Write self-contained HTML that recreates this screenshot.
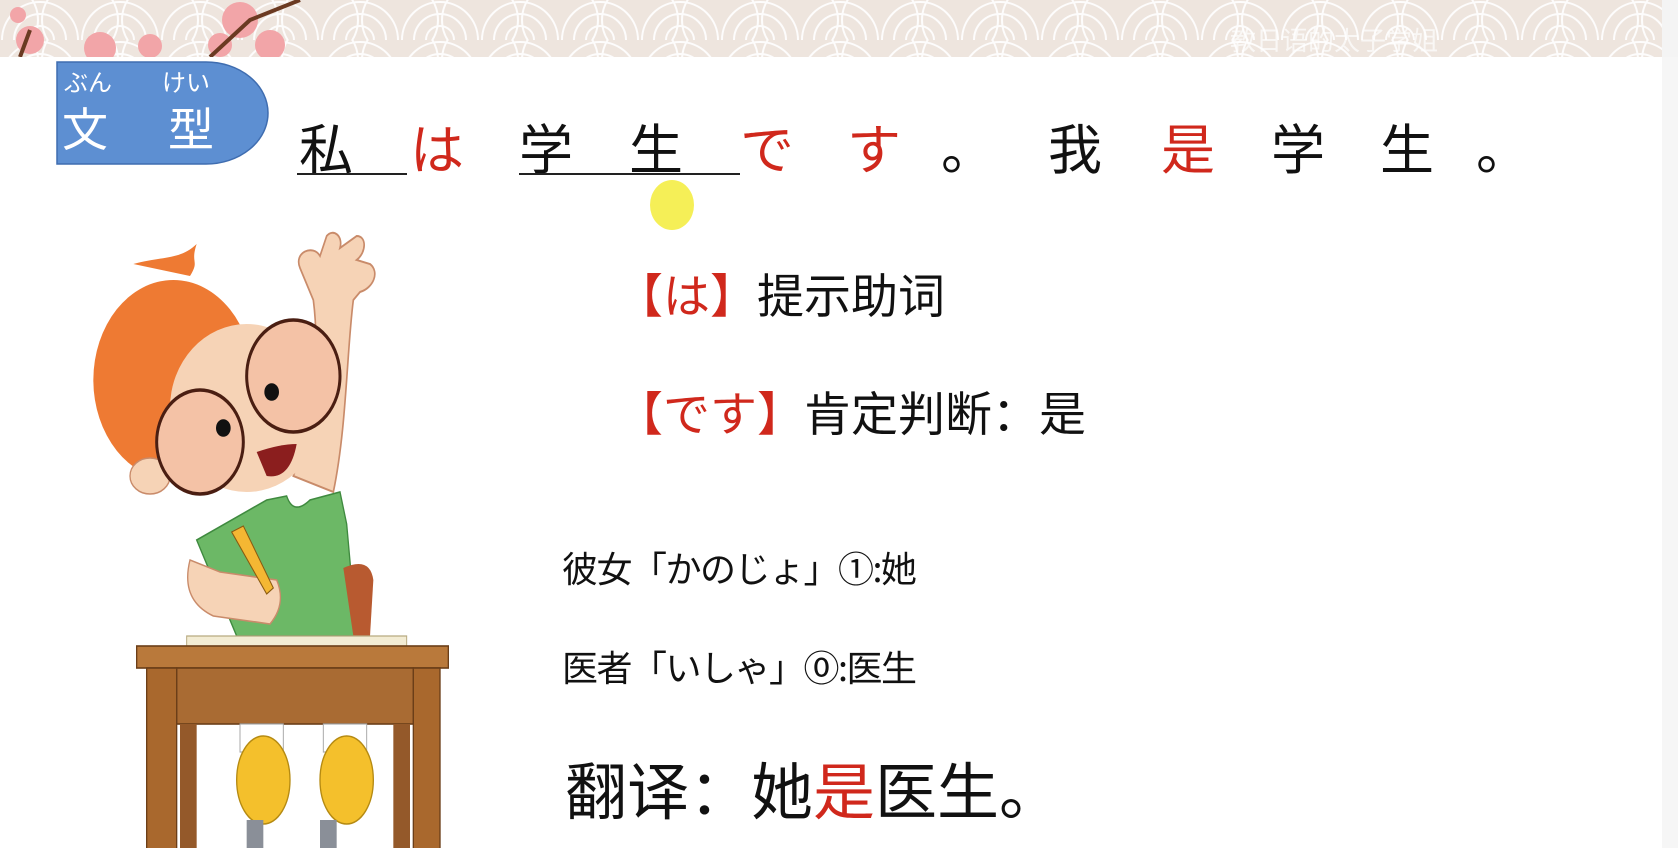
<!DOCTYPE html>
<html><head><meta charset="utf-8"><style>
*{margin:0;padding:0}
body{width:1678px;height:848px;background:#fff;position:relative;overflow:hidden;font-family:"Liberation Sans","Noto Sans CJK SC",sans-serif;color:#111}
.a{position:absolute;white-space:nowrap;line-height:1}
.c{position:absolute;font-size:54px;line-height:1;transform:translate(-50%,-50%);top:146px;font-family:"Noto Sans CJK JP",sans-serif}
.r{color:#d0281c}
</style></head><body>
<svg class="a" style="left:0;top:0" width="1678" height="57" viewBox="0 0 1678 57">
<defs><pattern id="p" width="80" height="40" patternUnits="userSpaceOnUse">
<rect width="80" height="40" fill="#eee5de"/>
<g fill="none" stroke="#fff" stroke-width="2" opacity=".9">
<circle cx="40" cy="40" r="38"/><circle cx="40" cy="40" r="26"/><circle cx="40" cy="40" r="14"/>
<circle cx="0" cy="20" r="38"/><circle cx="80" cy="20" r="38"/></g></pattern></defs>
<rect width="1678" height="57" fill="url(#p)"/>
<rect x="1662" width="16" height="57" fill="#f4f4f4"/>
<g fill="#f2a5a8"><circle cx="30" cy="40" r="14"/><circle cx="100" cy="48" r="16"/><circle cx="150" cy="46" r="12"/><circle cx="240" cy="20" r="18"/><circle cx="270" cy="45" r="15"/><circle cx="220" cy="45" r="12"/><circle cx="18" cy="15" r="8"/></g>
<path d="M210 57 L250 20 L300 0 M20 57 L30 30" stroke="#6b3a22" stroke-width="4" fill="none"/>
<text x="1230" y="50" font-size="26" fill="#fff" opacity=".7" font-family="Noto Sans CJK SC">教日语的太子学姐</text>
</svg>
<div class="a" style="left:1662px;top:57px;width:16px;height:791px;background:#f6f6f6"></div>
<svg class="a" style="left:56px;top:61px" width="214" height="104"><path d="M1 1 H150 A62 51 0 0 1 150 103 H1 Z" fill="#5d8fd2" stroke="#3f6db0" stroke-width="1.5"/>
<text x="8" y="30" font-size="24" fill="#fff" font-family="Noto Sans CJK JP">ぶん</text><text x="106" y="30" font-size="24" fill="#fff" font-family="Noto Sans CJK JP">けい</text>
<text x="6" y="85" font-size="46" fill="#fff" font-family="Noto Sans CJK JP">文</text><text x="112" y="85" font-size="46" fill="#fff" font-family="Noto Sans CJK JP">型</text></svg>
<span class="c" style="left:326px">私</span><span class="c r" style="left:437px">は</span><span class="c" style="left:546px">学</span><span class="c" style="left:656px">生</span><span class="c r" style="left:767px">で</span><span class="c r" style="left:874px">す</span><span class="c" style="left:968px">。</span><span class="c" style="left:1075px">我</span><span class="c r" style="left:1188px">是</span><span class="c" style="left:1298px">学</span><span class="c" style="left:1407px">生</span><span class="c" style="left:1503px">。</span>
<div class="a" style="left:297px;top:173px;width:110px;height:2px;background:#222"></div>
<div class="a" style="left:519px;top:173px;width:221px;height:2px;background:#222"></div>
<div class="a" style="left:650px;top:180px;width:44px;height:50px;border-radius:50%;background:#f3ec3a;opacity:.85"></div>
<div class="a" style="left:616px;top:273px;font-size:47px"><span class="r">【は】</span>提示助词</div>
<div class="a" style="left:616px;top:391px;font-size:47px"><span class="r">【です】</span>肯定判断：是</div>
<div class="a" style="left:562px;top:549px;font-size:36px;letter-spacing:-1.5px;font-family:'Noto Sans CJK JP',sans-serif">彼女「かのじょ」①:她</div>
<div class="a" style="left:562px;top:648px;font-size:36px;letter-spacing:-1.5px;font-family:'Noto Sans CJK JP',sans-serif">医者「いしゃ」⓪:医生</div>
<div class="a" style="left:565px;top:763px;font-size:62px">翻译：她<span class="r">是</span>医生。</div>
<svg class="a" style="left:80px;top:220px" width="380" height="628" viewBox="0 0 1140 1570" preserveAspectRatio="none">
<path d="M640 640 C700 500 720 330 700 200 L660 120 C640 80 700 60 720 90 L740 40 C760 20 790 40 780 70 L830 40 C860 40 860 80 830 100 L870 110 C900 130 880 170 840 180 L820 200 C800 330 800 520 760 680 Z" fill="#f6d3b6" stroke="#c98b6a" stroke-width="5"/>
<ellipse cx="280" cy="400" rx="240" ry="250" fill="#ee7a33"/>
<path d="M160 110 C250 90 300 100 350 60 C330 110 360 100 330 140Z" fill="#ee7a33"/>
<ellipse cx="500" cy="470" rx="230" ry="210" fill="#f6d3b6"/>
<ellipse cx="210" cy="640" rx="60" ry="45" fill="#f6d3b6" stroke="#c98b6a" stroke-width="4"/>
<circle cx="640" cy="390" r="140" fill="#f4c2a6" stroke="#4a1e12" stroke-width="9"/>
<circle cx="360" cy="555" r="130" fill="#f4c2a6" stroke="#4a1e12" stroke-width="9"/>
<circle cx="575" cy="430" r="22" fill="#111"/><circle cx="430" cy="520" r="22" fill="#111"/>
<path d="M530 580 Q600 560 650 560 Q630 650 560 640 Z" fill="#8b1e1e"/>
<path d="M350 800 L560 700 L620 690 Q640 740 690 700 L780 680 L800 760 L830 1040 L470 1040 Z" fill="#6cb866" stroke="#3f8a3f" stroke-width="4"/>
<path d="M790 870 Q870 840 880 900 L870 1040 L820 1040 Z" fill="#b85a30"/>
<path d="M330 850 Q300 950 400 990 L570 1010 Q620 960 590 900 L420 880 Z" fill="#f6d3b6" stroke="#c98b6a" stroke-width="4"/>
<path d="M455 780 L490 765 L580 920 L560 935 Z" fill="#f4b733" stroke="#8a5a10" stroke-width="3"/>
<path d="M320 1040 L980 1040 L980 1080 L320 1075 Z" fill="#f3ecd3" stroke="#b8aa80" stroke-width="3"/>
<rect x="170" y="1065" width="935" height="55" fill="#b9793b" stroke="#6b3e18" stroke-width="4"/>
<rect x="290" y="1120" width="710" height="140" fill="#a96b33" stroke="#6b3e18" stroke-width="4"/>
<rect x="200" y="1120" width="90" height="460" fill="#a9682d" stroke="#6b3e18" stroke-width="4"/>
<rect x="1000" y="1120" width="80" height="460" fill="#a9682d" stroke="#6b3e18" stroke-width="4"/>
<rect x="300" y="1260" width="50" height="320" fill="#94592a"/><rect x="940" y="1260" width="50" height="320" fill="#94592a"/>
<rect x="480" y="1260" width="130" height="70" fill="#fff" stroke="#aaa" stroke-width="3"/><rect x="730" y="1260" width="130" height="70" fill="#fff" stroke="#aaa" stroke-width="3"/>
<ellipse cx="550" cy="1400" rx="80" ry="110" fill="#f4c02c" stroke="#b58a12" stroke-width="4"/>
<ellipse cx="800" cy="1400" rx="80" ry="110" fill="#f4c02c" stroke="#b58a12" stroke-width="4"/>
<rect x="500" y="1500" width="50" height="70" fill="#8a8f98"/><rect x="720" y="1500" width="50" height="70" fill="#8a8f98"/>
</svg>
</body></html>
